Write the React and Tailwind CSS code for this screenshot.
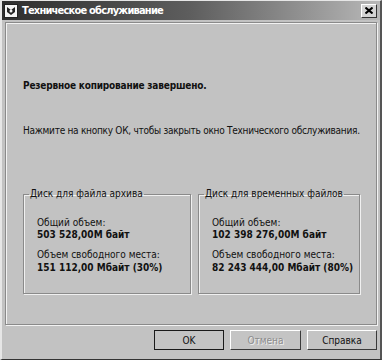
const font = { fontFamily: '"DejaVu Sans Condensed", "Liberation Sans", Arial, sans-serif' };

const Button = ({ children, isDefault, disabled, width }) => (
  <div
    className={`h-[20px] flex items-center justify-center text-[10px] border ${
      isDefault ? "border-[#1a1a1a]" : "border-[#ffffff] border-r-[#3a3a3a] border-b-[#3a3a3a]"
    } bg-[#c4c4c4] ${width}`}
  >
    <span className={disabled ? "text-[#8c8c8c] [text-shadow:1px_1px_0_#efefef]" : "text-[#111]"}>{children}</span>
  </div>
);

const DiskBox = ({ title, total, free, width }) => (
  <fieldset className={`border border-[#8a8a8a] shadow-[1px_1px_0_#f0f0f0,inset_1px_1px_0_#f0f0f0] h-[106px] ${width}`}>
    <legend className="ml-[5px] px-[1px] text-[10px] leading-[12px] text-[#111]">{title}</legend>
    <div className="pl-[13px] pt-[17px] text-[10px] leading-[12px] text-[#111] whitespace-nowrap">
      <div>Общий объем:</div>
      <div className="font-bold">{total}</div>
      <div className="mt-[8px]">Объем свободного места:</div>
      <div className="font-bold mt-[1px]">{free}</div>
    </div>
  </fieldset>
);

const App = () => {
  return (
    <div style={font} className="w-[382px] h-[360px] bg-[#c2c2c2] border-l-2 border-t border-r-2 border-b border-l-[#e6e6e6] border-t-[#e6e6e6] border-r-[#555] border-b-[#333] flex flex-col overflow-hidden">
      <div className="h-[19px] flex items-center bg-gradient-to-r from-[#2e2e2e] via-[#5e5e5e] to-[#b8b8b8] px-[2px]">
        <svg width="14" height="14" viewBox="0 0 14 14" className="shrink-0">
          <rect x="0.5" y="0.5" width="13" height="13" fill="#f4f4f4" stroke="#222" />
          <path d="M3 3 L7 6 L11 3 L11 8 L7 11 L3 8 Z" fill="#222" />
          <circle cx="7" cy="7" r="1.5" fill="#f4f4f4" />
        </svg>
        <div className="ml-[4px] text-white font-bold text-[11px] leading-[14px] tracking-[-0.8px]">Техническое обслуживание</div>
        <div className="ml-auto mr-[1px] w-[16px] h-[14px] bg-[#d4d4d4] border border-[#fff] border-r-[#333] border-b-[#333] flex items-center justify-center">
          <svg width="8" height="7" viewBox="0 0 8 7">
            <path d="M0.5 0.5 L7.5 6.5 M7.5 0.5 L0.5 6.5" stroke="#000" strokeWidth="2" />
          </svg>
        </div>
      </div>

      <div className="mx-[3px] mt-[2px] h-[303px] border border-[#8a8a8a] shadow-[1px_1px_0_#f2f2f2,inset_1px_1px_0_#f2f2f2] pl-[17px] pr-[4px]">
        <div className="mt-[56px] font-bold text-[10px] leading-[13px] text-[#111] whitespace-nowrap tracking-[-0.2px]">
          Резервное копирование завершено.
        </div>
        <div className="mt-[32px] text-[10px] leading-[13px] text-[#111] whitespace-nowrap tracking-[-0.27px]">
          Нажмите на кнопку ОК, чтобы закрыть окно Технического обслуживания.
        </div>
        <div className="mt-[51px] flex gap-[7px]">
          <DiskBox title="Диск для файла архива" total="503 528,00М байт" free="151 112,00 Мбайт (30%)" width="w-[168px]" />
          <DiskBox title="Диск для временных файлов" total="102 398 276,00М байт" free="82 243 444,00 Мбайт (80%)" width="w-[162px]" />
        </div>
      </div>

      <div className="mt-[5px] flex justify-end gap-[6px] pr-[3px]">
        <Button isDefault width="w-[70px]">OK</Button>
        <Button disabled width="w-[71px]">Отмена</Button>
        <Button width="w-[70px]">Справка</Button>
      </div>
    </div>
  );
};

export default App;
